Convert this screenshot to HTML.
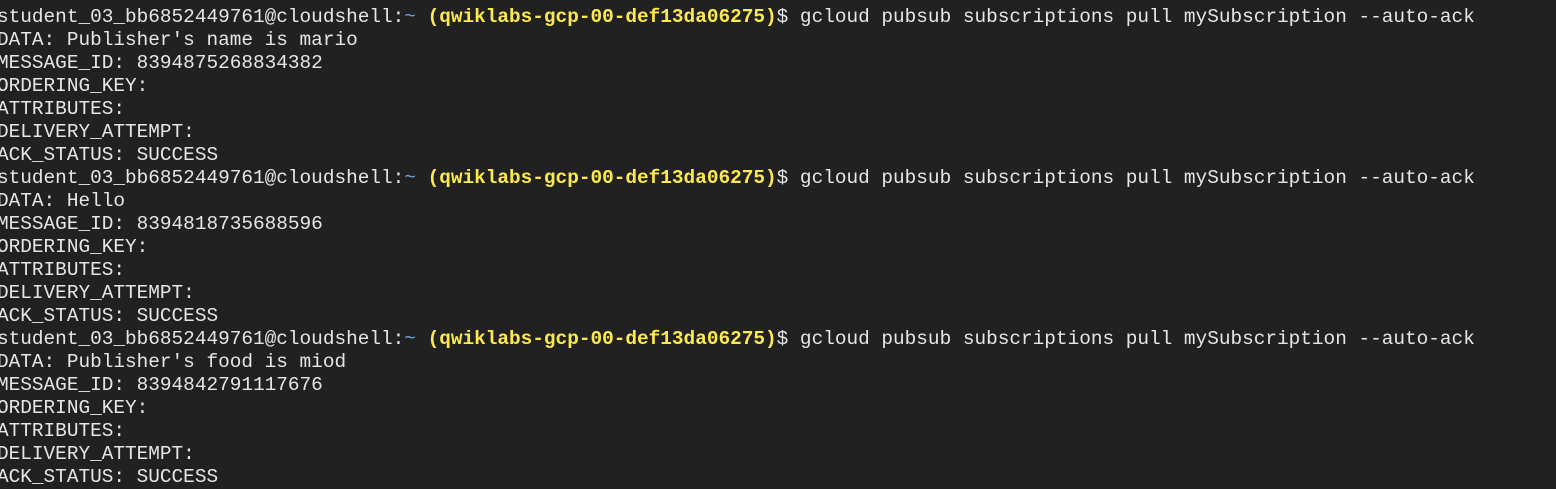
<html><head><style>
body{margin:0;background:#212121;width:1556px;height:484px;overflow:hidden}
pre{margin:0;position:absolute;left:-3px;top:6px;font-family:"Liberation Mono","Courier New",monospace;font-size:19.4px;line-height:23px;color:#e6e6e6}
.y{color:#fce94f;font-weight:bold}.b{color:#6fa8e8}
</style></head><body><pre>student_03_bb6852449761@cloudshell:<span class="b">~</span> <span class="y">(qwiklabs-gcp-00-def13da06275)</span>$ gcloud pubsub subscriptions pull mySubscription --auto-ack
DATA: Publisher's name is mario
MESSAGE_ID: 8394875268834382
ORDERING_KEY:
ATTRIBUTES:
DELIVERY_ATTEMPT:
ACK_STATUS: SUCCESS
student_03_bb6852449761@cloudshell:<span class="b">~</span> <span class="y">(qwiklabs-gcp-00-def13da06275)</span>$ gcloud pubsub subscriptions pull mySubscription --auto-ack
DATA: Hello
MESSAGE_ID: 8394818735688596
ORDERING_KEY:
ATTRIBUTES:
DELIVERY_ATTEMPT:
ACK_STATUS: SUCCESS
student_03_bb6852449761@cloudshell:<span class="b">~</span> <span class="y">(qwiklabs-gcp-00-def13da06275)</span>$ gcloud pubsub subscriptions pull mySubscription --auto-ack
DATA: Publisher's food is miod
MESSAGE_ID: 8394842791117676
ORDERING_KEY:
ATTRIBUTES:
DELIVERY_ATTEMPT:
ACK_STATUS: SUCCESS</pre></body></html>
